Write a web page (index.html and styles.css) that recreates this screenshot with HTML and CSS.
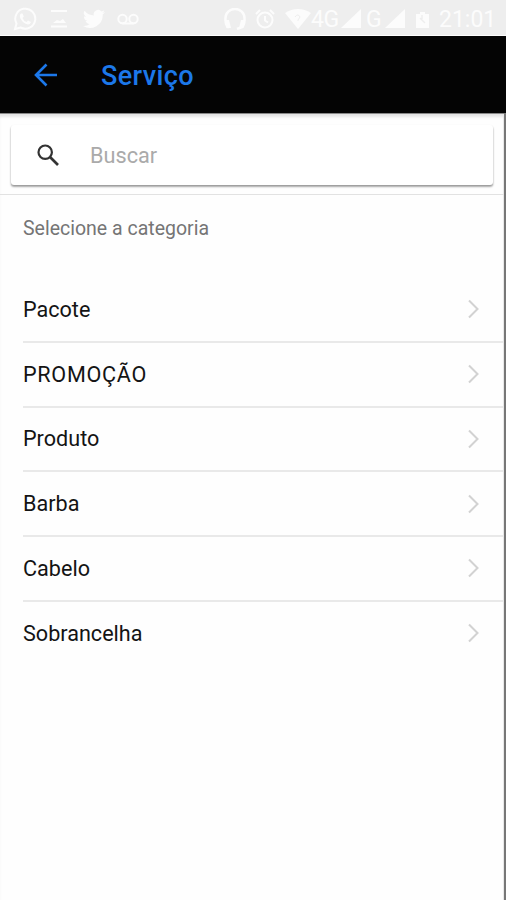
FILE: index.html
```html
<!DOCTYPE html>
<html lang="pt-BR">
<head>
<meta charset="utf-8">
<title>Serviço</title>
<link rel="stylesheet" href="styles.css">
</head>
<body>
<div class="status">
  <svg class="whatsapp" width="24" height="24" viewBox="0 0 24 24"><path d="M2 22l1.500-5.500A10 10 0 1 1 7.500 20.500Z" fill="none" stroke="currentColor" stroke-width="2"/><path d="M8 6.500q-2 1.500-.5 5 2.500 5 7.500 6 2 0 3-2.500l-3-1.500-1.500 1.500q-3-1-4-4l1.300-1.500L9.500 6.500z" fill="currentColor"/></svg>
  <svg class="picture" width="18" height="20" viewBox="0 0 18 20"><path d="M1 2h16M1 17.500h16" stroke="currentColor" stroke-width="2"/><path d="M3 14l4-3 3 1 3-2 3 4z" fill="currentColor"/></svg>
  <svg class="twitter" width="22" height="20" viewBox="0 0 24 20"><path d="M24 2.400a10 10 0 0 1-2.800.8A5 5 0 0 0 23.300.5a10 10 0 0 1-3.100 1.200 4.900 4.900 0 0 0-8.400 4.500A14 14 0 0 1 1.700 1a4.900 4.900 0 0 0 1.500 6.600A5 5 0 0 1 1 7a4.900 4.900 0 0 0 3.900 4.900 5 5 0 0 1-2.200.1 4.900 4.900 0 0 0 4.600 3.400A10 10 0 0 1 0 17.500 14 14 0 0 0 21.500 5a10 10 0 0 0 2.500-2.600z" fill="currentColor"/></svg>
  <svg class="voicemail" width="22" height="12" viewBox="0 0 22 12"><path d="M5.500 10.500h11" stroke="currentColor" stroke-width="2"/><circle cx="5.500" cy="6" r="4.200" fill="none" stroke="currentColor" stroke-width="2"/><circle cx="16.500" cy="6" r="4.200" fill="none" stroke="currentColor" stroke-width="2"/></svg>
  <span class="spacer"></span>
  <svg class="headset" width="24" height="22" viewBox="0 0 24 22"><path d="M6 19H4.500Q2 15 2.500 10A9.500 9 0 0 1 21.500 10q.5 5-2 9L14 21" fill="none" stroke="currentColor" stroke-width="2.500"/><path d="M2 12h4l2 8H4zM22 12h-4l-2 8h4z" fill="currentColor"/></svg>
  <svg class="alarm" width="20" height="20" viewBox="0 0 20 20"><circle cx="10" cy="11" r="7.500" fill="none" stroke="currentColor" stroke-width="2"/><path d="M1 5l4-4M19 5l-4-4M10 7v4.500l3 2" fill="none" stroke="currentColor" stroke-width="2"/></svg>
  <svg class="wifi" width="26" height="20" viewBox="0 0 26 20"><path d="M0 4Q13-4 26 4L13 20z" fill="currentColor"/><path d="M10 8q3-4 5 0l-2 3v1" fill="none" stroke="#eee" stroke-width="1"/></svg>
  <span class="net">4G</span>
  <svg class="signal" width="20" height="19" viewBox="0 0 20 19"><path d="M20 0v19H0z" fill="currentColor"/></svg>
  <span class="net net-g">G</span>
  <svg class="signal" width="20" height="19" viewBox="0 0 20 19"><path d="M20 0v19H0z" fill="currentColor"/></svg>
  <svg class="battery" width="13" height="16" viewBox="0 0 13 16"><path d="M0 2h4V0h5v2h4v14H0z" fill="currentColor"/><path d="M4 6l5 5M6 3v4" stroke="#eee" stroke-width="1.500"/></svg>
  <span class="clock">21:01</span>
</div>
<header class="toolbar">
  <svg class="back" width="24" height="24" viewBox="0 0 24 24"><path d="M23 12H2M12.500 1.500L2 12l10.500 10.500" fill="none" stroke="currentColor" stroke-width="2.600"/></svg>
  <h1 class="title">Serviço</h1>
</header>
<main class="content">
  <div class="search-area">
    <label class="search">
      <svg width="22" height="22" viewBox="0 0 22 22"><circle cx="8.200" cy="8.200" r="6.700" fill="none" stroke="currentColor" stroke-width="2.200"/><path d="M13 13l8 8" stroke="currentColor" stroke-width="2.700"/></svg>
      <span class="placeholder">Buscar</span>
    </label>
  </div>
  <h2 class="caption">Selecione a categoria</h2>
  <ul class="list">
    <li class="item"><span>Pacote</span><svg class="chevron" width="12" height="20" viewBox="0 0 12 20"><path d="M1 1.500l8.500 8.500-8.500 8.500"/></svg></li>
    <li class="item"><span class="caps">PROMOÇÃO</span><svg class="chevron" width="12" height="20" viewBox="0 0 12 20"><path d="M1 1.500l8.500 8.500-8.500 8.500"/></svg></li>
    <li class="item"><span>Produto</span><svg class="chevron" width="12" height="20" viewBox="0 0 12 20"><path d="M1 1.500l8.500 8.500-8.500 8.500"/></svg></li>
    <li class="item"><span>Barba</span><svg class="chevron" width="12" height="20" viewBox="0 0 12 20"><path d="M1 1.500l8.500 8.500-8.500 8.500"/></svg></li>
    <li class="item"><span>Cabelo</span><svg class="chevron" width="12" height="20" viewBox="0 0 12 20"><path d="M1 1.500l8.500 8.500-8.500 8.500"/></svg></li>
    <li class="item"><span>Sobrancelha</span><svg class="chevron" width="12" height="20" viewBox="0 0 12 20"><path d="M1 1.500l8.500 8.500-8.500 8.500"/></svg></li>
  </ul>
</main>
</body>
</html>
```
FILE: styles.css
```css
* { box-sizing: border-box; }
body {
  margin: 0;
  height: 900px;
  display: flex;
  flex-direction: column;
  overflow: hidden;
  background: #fefefe;
  font-family: Roboto, "Liberation Sans", sans-serif;
}
svg { display: block; flex: none; }
.status {
  display: flex;
  align-items: center;
  height: 36px;
  padding: 2px 11px 0 13px;
  background: #eee;
  border-bottom: 1px solid #fdfdfd;
  color: #fcfcfc;
}
.picture { margin-left: 13px; }
.twitter { margin-left: 15px; }
.voicemail { margin-left: 12px; }
.spacer { flex: 1; }
.alarm { margin-left: 8px; }
.wifi { margin-left: 10px; }
.net { width: 28px; font-size: 23px; line-height: 33px; letter-spacing: -0.5px; margin-top: 2px; }
.net-g { width: 17px; margin-left: 5px; }
.signal { margin-left: 2px; }
.battery { margin: 3px 0 0 11px; }
.clock { width: 56px; margin: 2px 0 0 10px; font-size: 23px; line-height: 33px; }
.toolbar {
  display: flex;
  align-items: center;
  height: 77px;
  padding-left: 34px;
  background: #040404;
  color: #1c78ea;
}
.title {
  margin: 2px 0 0 43px;
  font-size: 27px;
  line-height: 32px;
  font-weight: 500;
  letter-spacing: 0.4px;
}
.content {
  flex: 1;
  border-right: 2px solid #777;
  box-shadow: inset 0 1px #888, inset 0 5px 3px -1px #e4e4e4, inset -1px 0 #e8e8e8;
}
.search-area {
  height: 82px;
  padding: 12px 11px 0;
  border-bottom: 1px solid #e2e2e2;
}
.search {
  display: flex;
  align-items: center;
  height: 60px;
  padding-left: 26px;
  border-radius: 3px;
  background: #fff;
  box-shadow: 0 2px 2px rgba(0, 0, 0, 0.3), 0 1px 2px rgba(0, 0, 0, 0.16);
  color: #333;
}
.placeholder { margin: 2px 0 0 31px; font-size: 21.700px; line-height: 26px; color: #aaa; }
.caption {
  margin: 21px 0 0 23px;
  font-size: 19.500px;
  line-height: 26px;
  font-weight: 400;
  color: #757575;
}
.list {
  margin: 36px 1px 0 23px;
  padding: 0;
  list-style: none;
}
.item {
  display: flex;
  align-items: center;
  justify-content: space-between;
  height: 64.750px;
  padding-right: 23px;
  border-bottom: 2px solid #e9e9e9;
  font-size: 21.600px;
  color: #141414;
}
.item:last-child { border-bottom-color: transparent; }
.caps { letter-spacing: 0.700px; }
.chevron { fill: none; stroke: #d2d2d2; stroke-width: 2; }
```
